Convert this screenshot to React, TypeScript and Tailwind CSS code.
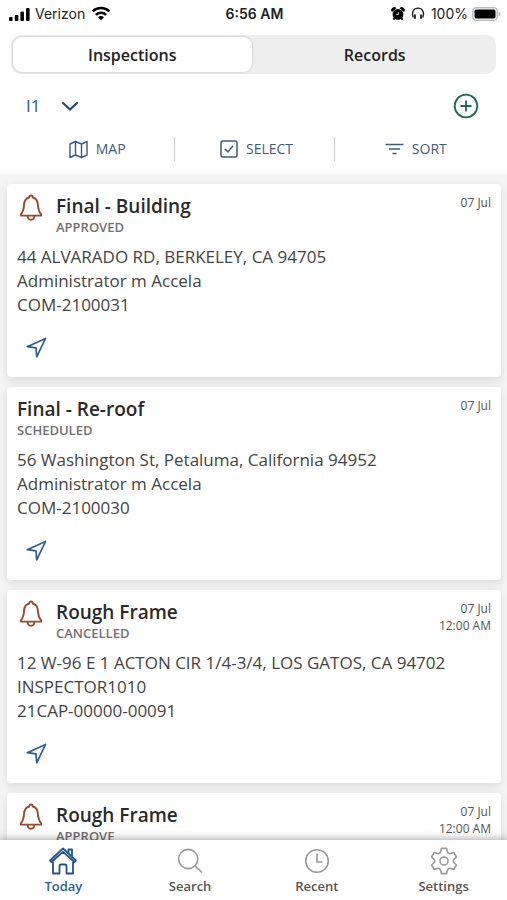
import { ReactNode } from 'react';

interface Inspection {
  title: string;
  status: string;
  alert?: boolean;
  date: string;
  time?: string;
  address: string;
  inspector: string;
  record: string;
}

const inspections: Inspection[] = [
  {
    title: 'Final - Building',
    status: 'APPROVED',
    alert: true,
    date: '07 Jul',
    address: '44 ALVARADO RD, BERKELEY, CA 94705',
    inspector: 'Administrator m Accela',
    record: 'COM-2100031',
  },
  {
    title: 'Final - Re-roof',
    status: 'SCHEDULED',
    date: '07 Jul',
    address: '56 Washington St, Petaluma, California 94952',
    inspector: 'Administrator m Accela',
    record: 'COM-2100030',
  },
  {
    title: 'Rough Frame',
    status: 'CANCELLED',
    alert: true,
    date: '07 Jul',
    time: '12:00 AM',
    address: '12 W-96 E 1 ACTON CIR 1/4-3/4, LOS GATOS, CA 94702',
    inspector: 'INSPECTOR1010',
    record: '21CAP-00000-00091',
  },
  {
    title: 'Rough Frame',
    status: 'APPROVE',
    alert: true,
    date: '07 Jul',
    time: '12:00 AM',
    address: '',
    inspector: '',
    record: '',
  },
];

function StatusBar() {
  return (
    <div className="grid grid-cols-3 items-center h-[27px] pl-2 pr-1.5 text-[14px] leading-5 text-[#222] font-['Inter',sans-serif]">
      <div className="flex items-center gap-1">
        <svg width="23" height="14" viewBox="0 0 23 14" fill="#000">
          <rect x="1" y="10" width="3.6" height="4" rx="1" />
          <rect x="6.8" y="8" width="3.6" height="6" rx="1" />
          <rect x="12.4" y="4.6" width="3.6" height="9.4" rx="1" />
          <rect x="18" y="1" width="3.6" height="13" rx="1" />
        </svg>
        <span>Verizon</span>
        <svg className="ml-0.5" width="20" height="15" viewBox="0 0 20 15" fill="none" stroke="#000" strokeWidth="2.6">
          <path d="M1.6 5.4C6.2 .9 13.8 .9 18.4 5.4" />
          <path d="M4.9 8.9C7.8 6.1 12.2 6.1 15.1 8.9" />
          <path d="M10 14.2L7 11.2C8.7 9.7 11.3 9.7 13 11.2Z" fill="#000" stroke="none" />
        </svg>
      </div>
      <div className="text-center font-semibold">6:56 AM</div>
      <div className="flex items-center justify-end gap-1">
        <svg width="14" height="14" viewBox="0 0 14 14" fill="#000">
          <circle cx="7" cy="7.4" r="5.4" />
          <path d="M1 5A2.8 2.8 0 0 1 5.400 1.200ZM13 5A2.8 2.8 0 0 0 8.600 1.200Z" />
          <path d="M2.4 12.6L4 10.6M11.6 12.6L10 10.6" stroke="#000" strokeWidth="1.8" />
          <path d="M7.4 5V7.6H5" fill="none" stroke="#fff" strokeWidth=".8" />
        </svg>
        <svg className="mx-0.5" width="14" height="13" viewBox="0 0 14 13" fill="none" stroke="#222" strokeWidth="1.3">
          <path d="M2.2 10.5C.2 5.2 2.6 1.2 7 1.2S13.8 5.2 11.8 10.5" />
          <path d="M3.9 7.4V11.8M10.1 7.4V11.8" strokeWidth="2" />
        </svg>
        <span>100%</span>
        <svg width="29" height="14" viewBox="0 0 29 14">
          <rect x=".8" y=".8" width="24.4" height="12.4" rx="3.5" fill="none" stroke="#bbb" strokeWidth="1.4" />
          <rect x="2.5" y="2.5" width="21" height="9" rx="1.8" fill="#000" />
          <path d="M26.7 4.8C28.8 5.6 28.8 8.4 26.7 9.2Z" fill="#aaa" />
        </svg>
      </div>
    </div>
  );
}

function BellIcon() {
  return (
    <svg width="24" height="28" viewBox="0 0 24 28" fill="none" stroke="#9a4a2c" strokeWidth="1.9" strokeLinejoin="round">
      <path d="M10.2 3.5C10.2 .9 13.8 .9 13.8 3.5C17 4.4 18.7 7 18.9 10.5C19.1 15.5 19.7 17.5 22.2 20.4V21.6H1.8V20.4C4.3 17.5 4.9 15.5 5.1 10.5C5.3 7 7 4.4 10.2 3.5Z" />
      <path d="M8.6 22C8.9 27 15.1 27 15.4 22" />
    </svg>
  );
}

function ToolButton({ icon, label }: { icon: ReactNode; label: string }) {
  return (
    <button className="flex flex-1 items-center justify-center gap-2 pl-1 text-[14px] leading-6 text-[#3f5a80]">
      {icon}
      <span>{label}</span>
    </button>
  );
}

function InspectionCard({ item }: { item: Inspection }) {
  return (
    <article className="h-[193px] shrink-0 rounded-sm bg-white px-[10px] pt-[9px] shadow-[0_3px_10px_rgba(0,0,0,0.11)]">
      <div className="flex items-start">
        {item.alert && (
          <div className="-ml-px mt-px w-10 pl-[3px]">
            <BellIcon />
          </div>
        )}
        <div className="flex-1">
          <h2 className="text-[19px] leading-[26px] font-semibold text-[#2a2a2a]">{item.title}</h2>
          <p className="text-[13px] leading-4 font-semibold text-[#707070]">{item.status}</p>
        </div>
        <div className="pt-px text-right text-[12px] leading-[17px] text-[#555]">
          <p>{item.date}</p>
          {item.time && <p>{item.time}</p>}
        </div>
      </div>
      {item.address && (
        <>
          <div className="mt-2.5 text-[17px] leading-6 text-[#444]">
            <p>{item.address}</p>
            <p>{item.inspector}</p>
            <p>{item.record}</p>
          </div>
          <button aria-label="Navigate" className="mt-[19px] ml-2 block">
            <svg width="24" height="24" viewBox="0 0 24 24" fill="none" stroke="#2c5c94" strokeWidth="1.7" strokeLinejoin="round">
              <path d="M20.5 2.5L11.7 20.8L11 11.8L2.3 10.7Z" />
            </svg>
          </button>
        </>
      )}
    </article>
  );
}

function NavItem({ icon, label, active }: { icon: ReactNode; label: string; active?: boolean }) {
  return (
    <a
      href="#"
      className={
        active
          ? 'flex flex-1 flex-col items-center text-[#2f5f93]'
          : 'flex flex-1 flex-col items-center text-[#555]'
      }
    >
      {icon}
      <span className="text-[13px] leading-5 font-semibold">{label}</span>
    </a>
  );
}

export default function App() {
  return (
    <div className="flex h-screen flex-col overflow-hidden bg-[#f6f6f6] font-['Open_Sans',sans-serif]">
      <header className="relative shrink-0 bg-white">
        <StatusBar />

        {/* Segmented control */}
        <div className="mx-[11px] mt-2 flex h-[39px] gap-1 rounded-[10px] bg-[#eee] p-0.5 text-[16px] leading-6 font-semibold text-[#222]">
          <button className="flex-1 rounded-[9px] bg-white shadow-[0_0_3px_rgba(0,0,0,0.2)]">Inspections</button>
          <button className="flex-1">Records</button>
        </div>

        <div className="flex h-[63px] items-center justify-between pl-[26px] pr-7">
          <label className="relative flex items-center">
            <select aria-label="Inspector" className="w-[54px] appearance-none text-[17px] leading-6 text-[#34567f]">
              <option>I1</option>
            </select>
            <svg className="pointer-events-none absolute right-px" width="18" height="12" viewBox="0 0 18 12" fill="none" stroke="#23497c" strokeWidth="2.2" strokeLinecap="round">
              <path d="M2 3L9 9.5L16 3" />
            </svg>
          </label>
          <button aria-label="Add inspection">
            <svg width="26" height="26" viewBox="0 0 26 26" fill="none" stroke="#1f6a4f" strokeWidth="1.8">
              <circle cx="13" cy="13" r="11.3" />
              <path d="M13 7.5V18.5M7.5 13H18.5" />
            </svg>
          </button>
        </div>

        <div className="flex h-[37px] items-start pl-4 pr-[14px]">
          <ToolButton
            label="MAP"
            icon={
              <svg width="19" height="19" viewBox="0 0 19 19" fill="none" stroke="currentColor" strokeWidth="1.4" strokeLinejoin="round">
                <path d="M1 4L6.5 1.5L12.5 4L18 1.5V15L12.5 17.5L6.5 15L1 17.5ZM6.5 1.5V15M12.5 4V17.5" />
              </svg>
            }
          />
          <div className="h-6 w-px bg-[#ccc]" />
          <ToolButton
            label="SELECT"
            icon={
              <svg width="18" height="18" viewBox="0 0 18 18" fill="none" stroke="currentColor" strokeWidth="1.5">
                <rect x="1" y="1" width="16" height="16" rx="2" />
                <path d="M5 9L8 12L13 5.8" />
              </svg>
            }
          />
          <div className="h-6 w-px bg-[#ccc]" />
          <ToolButton
            label="SORT"
            icon={
              <svg width="19" height="14" viewBox="0 0 19 14" fill="none" stroke="currentColor" strokeWidth="1.7">
                <path d="M.5 2.5H18.5M4 7H15M7.500 11.5H11.5" />
              </svg>
            }
          />
        </div>
      </header>

      <main className="flex flex-1 flex-col gap-2.5 overflow-hidden bg-[#f4f4f4] px-[7px] pt-2.5 pr-1.5">
        {inspections.map((item, i) => (
          <InspectionCard key={i} item={item} />
        ))}
      </main>

      <nav className="relative flex h-[60px] shrink-0 bg-white pt-1.5 shadow-[0_-1px_8px_rgba(0,0,0,0.35)]">
        <NavItem
          active
          label="Today"
          icon={
            <svg width="30" height="30" viewBox="0 0 30 30" fill="none" stroke="#23528a" strokeWidth="1.8" strokeLinejoin="round">
              <path d="M5 15.5V27.5H11.5V20Q11.5 18.5 13 18.5H17Q18.5 18.5 18.5 20V27.5H25V15.5" />
              <path d="M2 14.5L15 2.5L28 14.5L26.5 16L15 5.8L3.5 16Z" />
              <path d="M20.5 7V3.500H24V10.500" />
            </svg>
          }
        />
        <NavItem
          label="Search"
          icon={
            <svg width="30" height="30" viewBox="0 0 30 30" fill="none" stroke="#999" strokeWidth="1.6">
              <circle cx="13.2" cy="13" r="9.6" />
              <path d="M20 19.8L27 26.5" />
            </svg>
          }
        />
        <NavItem
          label="Recent"
          icon={
            <svg width="30" height="30" viewBox="0 0 30 30" fill="none" stroke="#999" strokeWidth="1.6">
              <circle cx="15" cy="15" r="11.3" />
              <path d="M15 7.5V16H20.5" />
            </svg>
          }
        />
        <NavItem
          label="Settings"
          icon={
            <svg width="30" height="30" viewBox="0 0 30 30" fill="none" stroke="#999" strokeWidth="1.6" strokeLinejoin="round">
              <path d="M12.4 2.4H17.6L18.2 5.4Q19.2 8.2 22 7.500L24.8 6.600L27.400 11L25.200 13Q23.400 15 25.200 17L27.400 19L24.800 23.400L22 22.500Q19.200 21.800 18.200 24.600L17.600 27.600H12.400L11.800 24.600Q10.800 21.800 8 22.500L5.200 23.400L2.600 19L4.800 17Q6.600 15 4.800 13L2.600 11L5.200 6.600L8 7.500Q10.800 8.200 11.800 5.400Z" />
              <circle cx="15" cy="15" r="4" />
            </svg>
          }
        />
      </nav>
    </div>
  );
}
